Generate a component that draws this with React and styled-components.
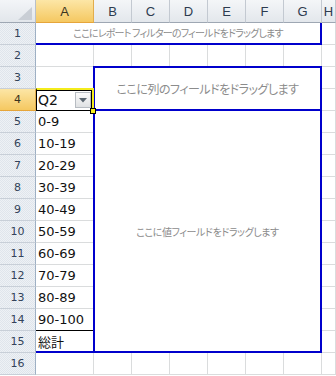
import styled, { createGlobalStyle, css } from "styled-components";

const GlobalStyle = createGlobalStyle`
  html, body {
    margin: 0;
    padding: 0;
    background: #fff;
  }
  body {
    font-family: "DejaVu Sans", sans-serif;
  }
`;

const COLUMNS = ["A", "B", "C", "D", "E", "F", "G", "H"];
const RANGES = [
  "0-9",
  "10-19",
  "20-29",
  "30-39",
  "40-49",
  "50-59",
  "60-69",
  "70-79",
  "80-89",
  "90-100",
];
const BLUE = "#0000cc";
const GRID = "#dadcdd";

const place = (p) => css`
  grid-column: ${p.$col} / span ${p.$w || 1};
  grid-row: ${p.$row} / span ${p.$h || 1};
`;

const Sheet = styled.div`
  display: grid;
  grid-template-columns: 36px 58px repeat(6, 38px) 14px;
  grid-template-rows: 23px repeat(16, 22px);
  width: 336px;
`;

const Corner = styled.div`
  ${place}
  box-sizing: border-box;
  display: flex;
  align-items: flex-end;
  justify-content: flex-end;
  padding: 0 3px 2px 0;
  background: linear-gradient(#f3f5f8, #e2e6eb);
  border-right: 1px solid #b9c0c9;
  border-bottom: 1px solid #9ea7b3;
`;

const ColHeader = styled.div`
  ${place}
  box-sizing: border-box;
  display: flex;
  align-items: center;
  justify-content: center;
  font-family: "Liberation Sans", Arial, sans-serif;
  font-size: 13px;
  color: #2d3b4f;
  background: linear-gradient(#f4f6f8, #e3e7ec);
  border-right: 1px solid #c3c9d1;
  border-bottom: 1px solid #9ea7b3;
  overflow: hidden;

  ${(p) =>
    p.$active &&
    css`
      background: linear-gradient(#fce6a6, #f5c861);
      border-right-color: #e2ad4c;
      border-bottom-color: #e6a53a;
      color: #3a3320;
    `}
`;

const RowHeader = styled.div`
  ${place}
  box-sizing: border-box;
  display: flex;
  align-items: center;
  justify-content: center;
  font-size: 11px;
  color: #33435a;
  background: repeating-conic-gradient(#dfe5ec 0 25%, #eef1f5 0 50%) 0 0 / 2px
    2px;
  border-right: 1px solid #9eb0c4;
  border-bottom: 1px solid #c8cfd8;

  ${(p) =>
    p.$active &&
    css`
      background: linear-gradient(#fce6a6, #f5c861);
      border-right-color: #e2ad4c;
      border-bottom-color: #e6a53a;
      color: #3a3320;
    `}
`;

const Cell = styled.div`
  ${place}
  box-sizing: border-box;
  display: flex;
  align-items: center;
  padding-left: 2px;
  font-size: 13px;
  color: #111;
  border-right: 1px solid ${GRID};
  border-bottom: 1px solid ${(p) => p.$bottom || GRID};
  white-space: nowrap;
  overflow: hidden;

  ${(p) =>
    p.$blueBottom &&
    css`
      border-bottom: 2px solid ${BLUE};
    `}
`;

const Jp = styled.span`
  font-family: "Noto Sans CJK JP", sans-serif;
  font-size: 13px;
`;

const ActiveCell = styled.div`
  ${place}
  position: relative;
  z-index: 2;
  box-sizing: border-box;
  margin-top: -1px;
  display: flex;
  align-items: center;
  justify-content: space-between;
  padding-left: 1px;
  font-size: 14px;
  color: #111;
  border-style: solid;
  border-width: 2px 2px 1px 1px;
  border-color: #f4ec1c #f4ec1c #000 #000;
  box-shadow: inset 0 1px 0 #000, inset -1px 0 0 #000;
`;

const DropButton = styled.div`
  box-sizing: border-box;
  width: 16px;
  height: 16px;
  margin-right: 1px;
  display: flex;
  align-items: center;
  justify-content: center;
  background: linear-gradient(#fbfbfb, #dfe1e3);
  border: 1px solid #b7bcc2;
`;

const FillHandle = styled.div`
  position: absolute;
  right: -4px;
  bottom: -4px;
  width: 6px;
  height: 6px;
  box-sizing: border-box;
  background: #f7ef1c;
  border: 1px solid #000;
`;

const Zone = styled.div`
  ${place}
  box-sizing: border-box;
  display: flex;
  align-items: center;
  justify-content: center;
  background: #fff;
  font-family: "Noto Sans CJK JP", sans-serif;
  font-feature-settings: "palt";
  color: #8c8c8c;
  white-space: nowrap;

  ${(p) =>
    p.$variant === "filter" &&
    css`
      padding-bottom: 2px;
      border-right: 2px solid ${BLUE};
      border-bottom: 2px solid ${BLUE};
    `}
  ${(p) =>
    p.$variant === "columns" &&
    css`
      margin: -1px 0 0 -1px;
      border: 2px solid ${BLUE};
    `}
  ${(p) =>
    p.$variant === "values" &&
    css`
      margin-left: -1px;
      border: 2px solid ${BLUE};
      border-top: 0;
    `}
`;

const ZoneLabel = styled.span`
  font-size: ${(p) => p.$size}px;
  letter-spacing: ${(p) => p.$spacing || 0}px;
`;

function CornerMark() {
  return (
    <svg width="14" height="13" viewBox="0 0 14 13">
      <polygon points="14,0 14,13 0,13" fill="#c9ced5" />
    </svg>
  );
}

function Caret() {
  return (
    <svg width="8" height="5" viewBox="0 0 8 5">
      <polygon points="0,0 8,0 4,4.5" fill="#5a6670" />
    </svg>
  );
}

export default function App() {
  const rows = Array.from({ length: 16 }, (_, i) => i + 1);

  return (
    <>
      <GlobalStyle />
      <Sheet>
        <Corner $col={1} $row={1}>
          <CornerMark />
        </Corner>
        {COLUMNS.map((c, i) => (
          <ColHeader key={c} $col={i + 2} $row={1} $active={c === "A"}>
            {c}
          </ColHeader>
        ))}
        {rows.map((r) => (
          <RowHeader key={r} $col={1} $row={r + 1} $active={r === 4}>
            {r}
          </RowHeader>
        ))}

        {/* row 1: report filter */}
        <Cell $col={9} $row={2} />

        {/* row 2 */}
        {COLUMNS.map((c, i) => (
          <Cell key={`r2-${c}`} $col={i + 2} $row={3} />
        ))}

        {/* rows 3-4 */}
        <Cell $col={2} $row={4} />
        <Cell $col={9} $row={4} />
        <ActiveCell $col={2} $row={5}>
          Q2
          <DropButton>
            <Caret />
          </DropButton>
          <FillHandle />
        </ActiveCell>
        <Cell $col={9} $row={5} />

        {/* rows 5-15: row labels */}
        {RANGES.map((label, i) => (
          <Cell
            key={label}
            $col={2}
            $row={i + 6}
            $bottom={i === RANGES.length - 1 ? "#000" : undefined}
          >
            {label}
          </Cell>
        ))}
        <Cell $col={2} $row={16} $blueBottom>
          <Jp>総計</Jp>
        </Cell>
        {Array.from({ length: 11 }, (_, i) => (
          <Cell key={`h-${i}`} $col={9} $row={i + 6} />
        ))}

        {/* row 16 */}
        {COLUMNS.map((c, i) => (
          <Cell key={`r16-${c}`} $col={i + 2} $row={17} />
        ))}

        <Zone $variant="filter" $col={2} $w={7} $row={2}>
          <ZoneLabel $size={10} $spacing={-0.8}>
            ここにレポート フィルターのフィールドをドラッグします
          </ZoneLabel>
        </Zone>
        <Zone $variant="columns" $col={3} $w={6} $row={4} $h={2}>
          <ZoneLabel $size={12} $spacing={-0.5}>
            ここに列のフィールドをドラッグします
          </ZoneLabel>
        </Zone>
        <Zone $variant="values" $col={3} $w={6} $row={6} $h={11}>
          <ZoneLabel $size={10} $spacing={-0.4}>
            ここに値フィールドをドラッグします
          </ZoneLabel>
        </Zone>
      </Sheet>
    </>
  );
}
